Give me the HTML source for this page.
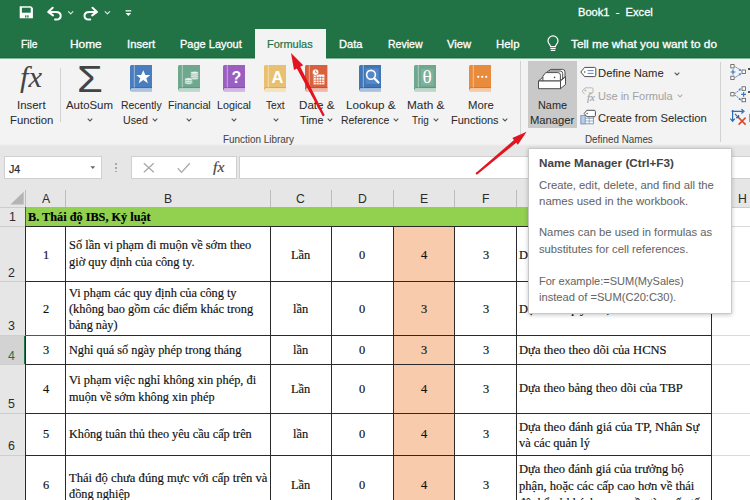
<!DOCTYPE html>
<html lang="vi"><head><meta charset="utf-8"><title>Name Manager - Excel</title>
<style>
html,body{margin:0;padding:0}
body{width:750px;height:500px;overflow:hidden;position:relative;background:#fff;font-family:"Liberation Sans", sans-serif;}
#app{position:absolute;left:0;top:0;width:750px;height:500px;overflow:hidden;background:#fff}
#app div,#app svg{position:absolute}
.t{position:absolute;white-space:pre;line-height:16px;height:16px;transform-origin:0 50%;-webkit-text-stroke:.05px}
.s{font-family:"Liberation Serif", serif;-webkit-text-stroke:.18px}
</style></head><body><div id="app">
<div style="left:0px;top:0px;width:750px;height:58px;background:#217346;"></div>
<div style="left:0px;top:57px;width:750px;height:1px;background:#1e6a40;"></div>
<div style="left:0px;top:58px;width:750px;height:1px;background:#86b79d;"></div>
<div style="left:255px;top:29px;width:71px;height:30px;background:#f3f3f3;"></div>
<div style="left:0px;top:59px;width:750px;height:87px;background:#f3f3f3;"></div>
<div style="left:0px;top:144px;width:750px;height:2px;background:linear-gradient(#f0f0f0,#e9e9e9);"></div>
<div style="left:0px;top:146px;width:750px;height:62px;background:#e6e6e6;"></div>
<svg style="left:18px;top:5px" width="120" height="18" viewBox="0 0 120 18" fill="none" stroke="#fff" stroke-width="1.4" stroke-linejoin="round" stroke-linecap="round"><path d="M1.700 1.200h11.300l1.900 1.900v10.100h-13.200z" fill="#fff" stroke="none"/><rect x="3.900" y="2.700" width="8.800" height="5" fill="#217346" stroke="none"/><rect x="7.100" y="10.300" width="1.300" height="2.300" fill="#217346" stroke="none"/><rect x="9.300" y="10.300" width="1.300" height="2.300" fill="#217346" stroke="none"/><path d="M34.700 2.700 30.200 6.900l4.800 3.500" stroke-width="2"/><path d="M30.800 6.900h7c3 0 4.900 1.700 4.900 3.900 0 2.300-1.900 3.800-4.400 3.800h-1.300" stroke-width="2"/><path d="M74.500 2.700 79 6.900l-4.800 3.500" stroke-width="2"/><path d="M78.400 6.900h-7c-3 0-4.900 1.700-4.900 3.900 0 2.300 1.900 3.800 4.400 3.800h1.300" stroke-width="2"/><path d="M50.500 6.600l2.200 2.200 2.200-2.200" stroke-width="1.200" stroke="#d8eae0"/><path d="M87.200 6.600l2.200 2.200 2.200-2.200" stroke-width="1.200" stroke="#d8eae0"/><path d="M108 5.800h4.800" stroke-width="1.300"/><path d="M107.600 8.100h5.600l-2.800 2.800z" fill="#fff" stroke="none"/></svg>
<svg style="left:545px;top:34px" width="16" height="20" viewBox="0 0 16 20" fill="none" stroke="#fff" stroke-width="1.2" stroke-linecap="round"><path d="M5.600 12.600c0-1.800-2.600-2.900-2.600-5.700a5 5 0 0 1 10 0c0 2.800-2.600 3.900-2.600 5.700z"/><path d="M5.800 14.600h4.400M6.200 16.500h3.600"/></svg>
<div style="left:60px;top:68px;width:1px;height:54px;background:#d2d2d2;"></div>
<svg style="left:86.4px;top:116.5px" width="8" height="6" viewBox="0 0 8 6" fill="none" stroke="#555" stroke-width="1.1"><path d="M1.700 1.700 4 4l2.300-2.300"/></svg>
<svg style="left:129.7px;top:65.2px" width="22.4" height="26.4" viewBox="0 0 22.400 26.400"><path d="M1.600 0h20.800v26.400h-20.800a1.600 1.600 0 0 1-1.600-1.600v-23.200a1.600 1.600 0 0 1 1.600-1.600z" fill="#4a7dbd"/><path d="M1 22.800h21.400v3.600h-20.600a1.600 1.600 0 0 1-1.400-2.200z" fill="#fff" opacity=".55"/><path d="M0.300 24.200a1.700 1.700 0 0 1 1.500-1.600h20.600" fill="none" stroke="#3a67a3" stroke-width=".9"/><path d="M4.300 0v22.600" stroke="#fff" stroke-opacity=".5" stroke-width=".9"/><path d="M13.300 5.200l2.050 4.700h5l-4 3.250 1.550 5-4.600-3.100-4.600 3.100 1.550-5-4-3.250h5z" fill="#fff"/></svg>
<svg style="left:151px;top:117px" width="8" height="6" viewBox="0 0 8 6" fill="none" stroke="#555" stroke-width="1.1"><path d="M1.700 1.700 4 4l2.300-2.300"/></svg>
<svg style="left:178px;top:65.2px" width="22.4" height="26.4" viewBox="0 0 22.400 26.400"><path d="M1.600 0h20.800v26.400h-20.800a1.600 1.600 0 0 1-1.600-1.600v-23.200a1.600 1.600 0 0 1 1.600-1.600z" fill="#6fa78f"/><path d="M1 22.800h21.400v3.600h-20.600a1.600 1.600 0 0 1-1.400-2.200z" fill="#fff" opacity=".55"/><path d="M0.300 24.200a1.700 1.700 0 0 1 1.500-1.600h20.600" fill="none" stroke="#5b917a" stroke-width=".9"/><path d="M4.300 0v22.600" stroke="#fff" stroke-opacity=".5" stroke-width=".9"/><g fill="#e8f1ed" stroke="#6aa38b" stroke-width=".5"><ellipse cx="16.500" cy="13.200" rx="3.900" ry="1.500"/><ellipse cx="16.500" cy="11.400" rx="3.900" ry="1.500"/><ellipse cx="16.500" cy="9.600" rx="3.900" ry="1.500"/><ellipse cx="16.500" cy="7.800" rx="3.900" ry="1.500"/><ellipse cx="10.600" cy="17.800" rx="3.900" ry="1.500"/><ellipse cx="10.600" cy="16" rx="3.900" ry="1.500"/><ellipse cx="10.600" cy="14.200" rx="3.900" ry="1.500"/></g></svg>
<svg style="left:185px;top:116.5px" width="8" height="6" viewBox="0 0 8 6" fill="none" stroke="#555" stroke-width="1.1"><path d="M1.700 1.700 4 4l2.300-2.300"/></svg>
<svg style="left:223px;top:65.2px" width="22.4" height="26.4" viewBox="0 0 22.400 26.400"><path d="M1.600 0h20.800v26.400h-20.800a1.600 1.600 0 0 1-1.600-1.600v-23.200a1.600 1.600 0 0 1 1.600-1.600z" fill="#9a5fc0"/><path d="M1 22.800h21.400v3.600h-20.600a1.600 1.600 0 0 1-1.400-2.200z" fill="#fff" opacity=".55"/><path d="M0.300 24.200a1.700 1.700 0 0 1 1.500-1.600h20.600" fill="none" stroke="#8049a8" stroke-width=".9"/><path d="M4.300 0v22.600" stroke="#fff" stroke-opacity=".5" stroke-width=".9"/><text x="13.400" y="18.200" font-family="Liberation Sans, sans-serif" font-weight="700" font-size="16" fill="#fff" text-anchor="middle">?</text></svg>
<svg style="left:230px;top:116.5px" width="8" height="6" viewBox="0 0 8 6" fill="none" stroke="#555" stroke-width="1.1"><path d="M1.700 1.700 4 4l2.300-2.300"/></svg>
<svg style="left:264px;top:65.2px" width="22.4" height="26.4" viewBox="0 0 22.400 26.400"><path d="M1.600 0h20.800v26.400h-20.800a1.600 1.600 0 0 1-1.600-1.600v-23.200a1.600 1.600 0 0 1 1.600-1.600z" fill="#e9c06f"/><path d="M1 22.800h21.400v3.600h-20.600a1.600 1.600 0 0 1-1.400-2.200z" fill="#fff" opacity=".55"/><path d="M0.300 24.200a1.700 1.700 0 0 1 1.500-1.600h20.600" fill="none" stroke="#d5a750" stroke-width=".9"/><path d="M4.300 0v22.600" stroke="#fff" stroke-opacity=".5" stroke-width=".9"/><text x="13.400" y="18.300" font-family="Liberation Sans, sans-serif" font-size="16.500" font-weight="700" fill="#fff" text-anchor="middle">A</text></svg>
<svg style="left:271.8px;top:116.5px" width="8" height="6" viewBox="0 0 8 6" fill="none" stroke="#555" stroke-width="1.1"><path d="M1.700 1.700 4 4l2.300-2.300"/></svg>
<svg style="left:305.2px;top:65.2px" width="22.4" height="26.4" viewBox="0 0 22.400 26.400"><path d="M1.600 0h20.800v26.400h-20.800a1.600 1.600 0 0 1-1.600-1.600v-23.200a1.600 1.600 0 0 1 1.600-1.600z" fill="#d9603e"/><path d="M1 22.800h21.400v3.600h-20.600a1.600 1.600 0 0 1-1.400-2.200z" fill="#fff" opacity=".55"/><path d="M0.300 24.200a1.700 1.700 0 0 1 1.500-1.600h20.600" fill="none" stroke="#bf4c2c" stroke-width=".9"/><path d="M4.300 0v22.600" stroke="#fff" stroke-opacity=".5" stroke-width=".9"/><rect x="8.600" y="9.600" width="10.800" height="9.800" fill="#fff"/><path d="M8.600 12.600h10.800M8.600 15.200h10.800M8.600 17.600h10.800M11.300 11v8.400M14 11v8.400M16.700 11v8.400" stroke="#d9603e" stroke-width=".7"/><circle cx="10.600" cy="7.200" r="3.300" fill="#fff" stroke="#d9603e" stroke-width=".8"/><path d="M10.600 5.400v2h1.600" stroke="#d9603e" stroke-width=".8" fill="none"/></svg>
<svg style="left:326px;top:117px" width="8" height="6" viewBox="0 0 8 6" fill="none" stroke="#555" stroke-width="1.1"><path d="M1.700 1.700 4 4l2.300-2.300"/></svg>
<svg style="left:359px;top:65.2px" width="22.4" height="26.4" viewBox="0 0 22.400 26.400"><path d="M1.600 0h20.800v26.400h-20.800a1.600 1.600 0 0 1-1.600-1.600v-23.200a1.600 1.600 0 0 1 1.600-1.600z" fill="#4076b6"/><path d="M1 22.800h21.400v3.600h-20.600a1.600 1.600 0 0 1-1.400-2.200z" fill="#fff" opacity=".55"/><path d="M0.300 24.200a1.700 1.700 0 0 1 1.500-1.600h20.600" fill="none" stroke="#2f5f99" stroke-width=".9"/><path d="M4.300 0v22.600" stroke="#fff" stroke-opacity=".5" stroke-width=".9"/><rect x="6.600" y="3.400" width="13.200" height="15.600" fill="#5488c7"/><circle cx="12" cy="9.800" r="4.400" fill="none" stroke="#fff" stroke-width="1.600"/><path d="M15.300 13.200l4.200 4.400" stroke="#fff" stroke-width="2.100" stroke-linecap="round"/></svg>
<svg style="left:392.4px;top:117px" width="8" height="6" viewBox="0 0 8 6" fill="none" stroke="#555" stroke-width="1.1"><path d="M1.700 1.700 4 4l2.300-2.300"/></svg>
<svg style="left:413.6px;top:65.2px" width="22.4" height="26.4" viewBox="0 0 22.400 26.400"><path d="M1.600 0h20.800v26.400h-20.800a1.600 1.600 0 0 1-1.600-1.600v-23.200a1.600 1.600 0 0 1 1.600-1.600z" fill="#6fa78f"/><path d="M1 22.800h21.400v3.600h-20.600a1.600 1.600 0 0 1-1.400-2.200z" fill="#fff" opacity=".55"/><path d="M0.300 24.200a1.700 1.700 0 0 1 1.500-1.600h20.600" fill="none" stroke="#5b917a" stroke-width=".9"/><path d="M4.300 0v22.600" stroke="#fff" stroke-opacity=".5" stroke-width=".9"/><rect x="7" y="3.600" width="12.600" height="17" fill="#7fb19b"/><text x="13.300" y="18.400" font-family="Liberation Serif, serif" font-size="19.500" fill="#fff" text-anchor="middle">θ</text></svg>
<svg style="left:432px;top:117px" width="8" height="6" viewBox="0 0 8 6" fill="none" stroke="#555" stroke-width="1.1"><path d="M1.700 1.700 4 4l2.300-2.300"/></svg>
<svg style="left:468.8px;top:65.2px" width="22.4" height="26.4" viewBox="0 0 22.400 26.400"><path d="M1.600 0h20.800v26.400h-20.800a1.600 1.600 0 0 1-1.600-1.600v-23.200a1.600 1.600 0 0 1 1.600-1.600z" fill="#e98b3c"/><path d="M1 22.800h21.400v3.600h-20.600a1.600 1.600 0 0 1-1.400-2.200z" fill="#fff" opacity=".55"/><path d="M0.300 24.200a1.700 1.700 0 0 1 1.500-1.600h20.600" fill="none" stroke="#cf7226" stroke-width=".9"/><path d="M4.300 0v22.600" stroke="#fff" stroke-opacity=".5" stroke-width=".9"/><circle cx="9.200" cy="11.800" r="1.150" fill="#fff"/><circle cx="13.200" cy="11.800" r="1.150" fill="#fff"/><circle cx="17.200" cy="11.800" r="1.150" fill="#fff"/></svg>
<svg style="left:501.3px;top:117px" width="8" height="6" viewBox="0 0 8 6" fill="none" stroke="#555" stroke-width="1.1"><path d="M1.700 1.700 4 4l2.300-2.300"/></svg>
<div style="left:519.5px;top:61px;width:1px;height:73px;background:#d2d2d2;"></div>
<div style="left:528px;top:60.6px;width:49px;height:67.4px;background:#c9c9c9;"></div>
<svg style="left:537px;top:67px" width="30" height="23" viewBox="0 0 30 23" fill="#fff" stroke="#4d4d4d" stroke-width="1" stroke-linejoin="round"><path d="M1.500 14l4.600-4.200h22.400l-5 4.200z" fill="#e9e9e9"/><path d="M10.500 11v-5l2.800-3.600h12.200q2.500 0 2.500 2.500v6.100z"/><path d="M8.200 12.600v-5l2.800-3.600h12.200q2.500 0 2.500 2.500v6.100z"/><path d="M5.900 14v-4.800l2.800-3.600h12.200q2.500 0 2.500 2.500v5.900z"/><circle cx="17.600" cy="10.400" r=".8" fill="#4d4d4d" stroke="none"/><path d="M1.500 14h22v7.700h-22z"/><path d="M23.500 14l5-4.200v7.700l-5 4.200z"/></svg>
<svg style="left:579.500px;top:66px" width="17" height="12" viewBox="0 0 17 12" fill="#fff" stroke="#4d4d4d" stroke-width="1" stroke-linejoin="round"><path d="M4.600 1.400h9.800a1.400 1.400 0 0 1 1.400 1.400v6.400a1.400 1.400 0 0 1-1.400 1.400h-9.800l-3.800-4.600z"/><circle cx="4.700" cy="6" r=".8" fill="#4d4d4d" stroke="none"/><path d="M7.600 4.600h6M7.600 7.400h6" stroke="#4a78b8" stroke-width=".9"/><!--end--></svg>
<svg style="left:672.6px;top:70.5px" width="8" height="6" viewBox="0 0 8 6" fill="none" stroke="#555" stroke-width="1.1"><path d="M1.700 1.700 4 4l2.300-2.300"/></svg>
<svg style="left:580px;top:86px" width="17" height="18" viewBox="0 0 17 18" fill="none" stroke="#b9b9b9" stroke-width="1"><path d="M5 1.800h6.800a1.200 1.200 0 0 1 1.200 1.200v3.800h-4.200M5 1.800l-2.800 3.400 2.400 3" fill="none"/><circle cx="5.400" cy="4.400" r=".7"/><!--end--></svg>
<svg style="left:676.4px;top:93px" width="8" height="6" viewBox="0 0 8 6" fill="none" stroke="#b0b0b0" stroke-width="1.1"><path d="M1.700 1.700 4 4l2.300-2.300"/></svg>
<svg style="left:579.500px;top:108px" width="17" height="18" viewBox="0 0 17 18" fill="none" stroke="#4d4d4d" stroke-width="1"><rect x="1" y="7.600" width="12.400" height="8.200" fill="#fff" stroke="#7d9cc4"/><path d="M1 10.300h12.400M1 13h12.400M5.100 7.600v8.200M9.200 7.600v8.200" stroke="#7d9cc4" stroke-width=".8"/><rect x="1" y="7.600" width="4.100" height="8.200" fill="#b9cde8" stroke="#7d9cc4" stroke-width=".8"/><path d="M6.800 2.300h7.400a1.200 1.200 0 0 1 1.200 1.200v4a1.200 1.200 0 0 1-1.200 1.200h-7.400l-2.600-3.200z" fill="#fff"/><circle cx="7.100" cy="5.500" r=".7" fill="#4d4d4d" stroke="none"/><!--end--></svg>
<div style="left:720.3px;top:62px;width:1px;height:80px;background:#d2d2d2;"></div>
<svg style="left:729px;top:62px" width="21" height="66" viewBox="0 0 21 66" fill="none"><rect x="1.8" y="2.6" width="3.3" height="3.3" fill="#fff" stroke="#555" stroke-width=".8"/><rect x="1.8" y="14.2" width="3.3" height="3.3" fill="#fff" stroke="#555" stroke-width=".8"/><rect x="13" y="8" width="3.5" height="3.5" fill="#fff" stroke="#555" stroke-width=".8"/><path d="M6.400 4.800l5.400 3.600M6.400 15.400l5.400-3.600" stroke="#3b78c3" stroke-width="1" stroke-dasharray="1.600 .900"/><path d="M9.600 8.800l2.400-.2-1-2.200zM9.600 11.400l2.400.2-1 2.200z" fill="#3b78c3"/><path d="M4 7.600v4.800M1.600 10h4.800" stroke="#3b78c3" stroke-width="1.200"/><rect x="1.8" y="30.6" width="3.3" height="3.3" fill="#fff" stroke="#555" stroke-width=".8"/><rect x="13" y="24.8" width="3.5" height="3.5" fill="#fff" stroke="#555" stroke-width=".8"/><rect x="13" y="36.3" width="3.5" height="3.5" fill="#fff" stroke="#555" stroke-width=".8"/><path d="M6.200 31.400l5 -4M6.200 33.200l5 4" stroke="#3b78c3" stroke-width="1" stroke-dasharray="1.600 .900"/><path d="M9.400 27l2.500-.8-.7 2.500zM9.400 37.600l2.500.8-.7-2.500z" fill="#3b78c3"/><path d="M14.600 29.900v4.800M12.200 32.300h4.800" stroke="#3b78c3" stroke-width="1.200"/><path d="M3.600 48v10.800M1.400 56.600l2.200 2.600 2.200-2.600M3.600 49.300h10.400M12.400 47.100l2.600 2.200-2.600 2.200M6 52l3.400 3.400M9.600 53v2.600h-2.600" stroke="#2f6db5" stroke-width="1.200"/><circle cx="3.600" cy="49.300" r="1.100" fill="#2f6db5"/><path d="M9.600 55.600l7 7M16.600 55.600l-7 7" stroke="#d9482b" stroke-width="1.500"/><!--end--></svg>
<div style="left:748px;top:68.4px;width:2px;height:1.2px;background:#555;"></div>
<div style="left:748px;top:91.4px;width:2px;height:1.2px;background:#555;"></div>
<div style="left:748.8px;top:113.5px;width:1.2px;height:8px;background:#9a9a9a;"></div>
<div style="left:4px;top:156px;width:98px;height:23px;background:#fff;box-sizing:border-box;border:1px solid #d0d0d0"></div>
<svg style="left:89px;top:165px" width="8" height="5" viewBox="0 0 8 5"><path d="M1.400 1.200h4.800l-2.400 2.800z" fill="#666"/></svg>
<div style="left:115px;top:163.10000000000002px;width:1.5px;height:1.5px;background:#a8a8a8;"></div>
<div style="left:115px;top:167.0px;width:1.5px;height:1.5px;background:#a8a8a8;"></div>
<div style="left:115px;top:170.8px;width:1.5px;height:1.5px;background:#a8a8a8;"></div>
<div style="left:131px;top:156px;width:106px;height:23px;background:#fff;box-sizing:border-box;border:1px solid #d0d0d0"></div>
<svg style="left:142px;top:162px" width="50" height="12" viewBox="0 0 50 12" fill="none" stroke="#a9a9a9" stroke-width="1.300"><path d="M1.800 1.300l10 9M11.800 1.300l-10 9"/><path d="M35.800 6.300l3.700 4.100 8.300-9.200"/></svg>
<div style="left:239px;top:156px;width:520px;height:23px;background:#fff;box-sizing:border-box;border:1px solid #d0d0d0"></div>
<div style="left:25.0px;top:189.5px;width:1px;height:17.5px;background:#bcbcbc;"></div>
<div style="left:65.3px;top:189.5px;width:1px;height:17.5px;background:#bcbcbc;"></div>
<div style="left:269.5px;top:189.5px;width:1px;height:17.5px;background:#bcbcbc;"></div>
<div style="left:331.1px;top:189.5px;width:1px;height:17.5px;background:#bcbcbc;"></div>
<div style="left:392.8px;top:189.5px;width:1px;height:17.5px;background:#bcbcbc;"></div>
<div style="left:453.9px;top:189.5px;width:1px;height:17.5px;background:#bcbcbc;"></div>
<div style="left:516.0px;top:189.5px;width:1px;height:17.5px;background:#bcbcbc;"></div>
<div style="left:710.5px;top:189.5px;width:1px;height:17.5px;background:#bcbcbc;"></div>
<svg style="left:9px;top:190px" width="16" height="16" viewBox="0 0 16 16"><path d="M1.400 14.600h13.300v-12.800z" fill="#b4b4b4"/></svg>
<div style="left:0px;top:206.5px;width:750px;height:1px;background:#cdcdcd;"></div>
<div style="left:0px;top:208px;width:25.5px;height:292px;background:#e6e6e6;"></div>
<div style="left:0px;top:335px;width:25.5px;height:29.5px;background:#d3d3d3;"></div>
<div style="left:24px;top:335px;width:1.8px;height:29.5px;background:#217346;"></div>
<div style="left:0px;top:226.0px;width:25px;height:1px;background:#cecece;"></div>
<div style="left:0px;top:281.0px;width:25px;height:1px;background:#cecece;"></div>
<div style="left:0px;top:335.0px;width:25px;height:1px;background:#cecece;"></div>
<div style="left:0px;top:364.0px;width:25px;height:1px;background:#cecece;"></div>
<div style="left:0px;top:413.0px;width:25px;height:1px;background:#cecece;"></div>
<div style="left:0px;top:455.0px;width:25px;height:1px;background:#cecece;"></div>
<div style="left:711px;top:226.0px;width:39px;height:1px;background:#d9d9d9;"></div>
<div style="left:711px;top:281.0px;width:39px;height:1px;background:#d9d9d9;"></div>
<div style="left:711px;top:335.0px;width:39px;height:1px;background:#d9d9d9;"></div>
<div style="left:711px;top:364.0px;width:39px;height:1px;background:#d9d9d9;"></div>
<div style="left:711px;top:413.0px;width:39px;height:1px;background:#d9d9d9;"></div>
<div style="left:711px;top:455.0px;width:39px;height:1px;background:#d9d9d9;"></div>
<div style="left:25.5px;top:207px;width:686px;height:19px;background:#92d050;"></div>
<div style="left:393.3px;top:226px;width:61.1px;height:280px;background:#f8cbad;"></div>
<div style="left:25.0px;top:226px;width:1px;height:280px;background:#2a2a2a;"></div>
<div style="left:65.3px;top:226px;width:1px;height:280px;background:#2a2a2a;"></div>
<div style="left:269.5px;top:226px;width:1px;height:280px;background:#2a2a2a;"></div>
<div style="left:331.1px;top:226px;width:1px;height:280px;background:#2a2a2a;"></div>
<div style="left:392.8px;top:226px;width:1px;height:280px;background:#2a2a2a;"></div>
<div style="left:453.9px;top:226px;width:1px;height:280px;background:#2a2a2a;"></div>
<div style="left:516.0px;top:226px;width:1px;height:280px;background:#2a2a2a;"></div>
<div style="left:710.5px;top:226px;width:1px;height:280px;background:#2a2a2a;"></div>
<div style="left:25px;top:207px;width:1px;height:19px;background:#555;"></div>
<div style="left:710.5px;top:207px;width:1px;height:19px;background:#2a2a2a;"></div>
<div style="left:25px;top:226.0px;width:686.5px;height:1px;background:#2a2a2a;"></div>
<div style="left:25px;top:281.0px;width:686.5px;height:1px;background:#2a2a2a;"></div>
<div style="left:25px;top:335.0px;width:686.5px;height:1px;background:#2a2a2a;"></div>
<div style="left:25px;top:364.0px;width:686.5px;height:1px;background:#2a2a2a;"></div>
<div style="left:25px;top:413.0px;width:686.5px;height:1px;background:#2a2a2a;"></div>
<div style="left:25px;top:455.0px;width:686.5px;height:1px;background:#2a2a2a;"></div>
<div style="left:24.5px;top:334.5px;width:42px;height:1.5px;background:#217346;"></div>
<div style="left:528px;top:148px;width:204px;height:166px;background:#fff;z-index:5;box-sizing:border-box;border:1px solid #c9c9c9;box-shadow:0 1px 4px rgba(0,0,0,.22);border-radius:1px"></div>
<svg style="left:0;top:0;z-index:4" width="750" height="500" viewBox="0 0 750 500"><path d="M324.3 114.5L299.7 65.4L296.2 67.2L322.3 115.5z" fill="#e1141f"/><circle cx="323.3" cy="115.0" r="1.15" fill="#e1141f"/><path d="M291.0 53.0L303.2 65.2L294.0 70.0z" fill="#e1141f"/><path d="M477.5 174.3L517.4 141.8L515.1 139.1L476.1 172.7z" fill="#e1141f"/><circle cx="476.8" cy="173.5" r="1.10" fill="#e1141f"/><path d="M526.6 131.8L517.9 144.8L512.3 138.1z" fill="#e1141f"/></svg>
<span class="t" style="left:20.60px;top:35.60px;font-size:11.2px;color:#fff;-webkit-text-stroke:0.3px;transform:scaleX(0.9095);">File</span>
<span class="t" style="left:70.00px;top:35.60px;font-size:11.2px;color:#fff;-webkit-text-stroke:0.3px;transform:scaleX(1.0622);">Home</span>
<span class="t" style="left:126.80px;top:35.60px;font-size:11.2px;color:#fff;-webkit-text-stroke:0.3px;transform:scaleX(1.0077);">Insert</span>
<span class="t" style="left:180.00px;top:35.60px;font-size:11.2px;color:#fff;-webkit-text-stroke:0.3px;transform:scaleX(0.9836);">Page Layout</span>
<span class="t" style="left:267.00px;top:35.60px;font-size:11.2px;color:#217346;-webkit-text-stroke:0.2px;transform:scaleX(0.9802);">Formulas</span>
<span class="t" style="left:338.50px;top:35.60px;font-size:11.2px;color:#fff;-webkit-text-stroke:0.3px;transform:scaleX(0.9941);">Data</span>
<span class="t" style="left:387.50px;top:35.60px;font-size:11.2px;color:#fff;-webkit-text-stroke:0.3px;transform:scaleX(0.9404);">Review</span>
<span class="t" style="left:447.00px;top:35.60px;font-size:11.2px;color:#fff;-webkit-text-stroke:0.3px;transform:scaleX(0.9981);">View</span>
<span class="t" style="left:496.00px;top:35.60px;font-size:11.2px;color:#fff;-webkit-text-stroke:0.3px;transform:scaleX(1.0210);">Help</span>
<span class="t" style="left:571.00px;top:35.60px;font-size:11.2px;color:#fff;-webkit-text-stroke:0.3px;transform:scaleX(1.0575);">Tell me what you want to do</span>
<span class="t" style="left:578.40px;top:4.40px;font-size:11.2px;color:#fff;-webkit-text-stroke:0.3px;transform:scaleX(0.9940);">Book1  -  Excel</span>
<span class="t s" style="left:20.00px;top:69.20px;font-size:29px;color:#444;font-style:italic;-webkit-text-stroke:0px;transform:scaleX(1.0507);">fx</span>
<span class="t" style="left:17.00px;top:96.60px;font-size:11px;color:#2b2b2b;transform:scaleX(1.0394);">Insert</span>
<span class="t" style="left:9.60px;top:111.80px;font-size:11px;color:#2b2b2b;transform:scaleX(1.0284);">Function</span>
<span class="t" style="left:76.80px;top:71.00px;font-size:37.5px;color:#444;-webkit-text-stroke:0px;transform:scaleX(1.1127);">Σ</span>
<span class="t" style="left:66.00px;top:96.60px;font-size:11px;color:#2b2b2b;transform:scaleX(1.0387);">AutoSum</span>
<span class="t" style="left:120.80px;top:96.60px;font-size:11px;color:#2b2b2b;transform:scaleX(0.9487);">Recently</span>
<span class="t" style="left:122.90px;top:111.80px;font-size:11px;color:#2b2b2b;transform:scaleX(0.9655);">Used</span>
<span class="t" style="left:168.00px;top:96.60px;font-size:11px;color:#2b2b2b;transform:scaleX(0.9698);">Financial</span>
<span class="t" style="left:217.00px;top:96.60px;font-size:11px;color:#2b2b2b;transform:scaleX(0.9753);">Logical</span>
<span class="t" style="left:266.40px;top:96.60px;font-size:11px;color:#2b2b2b;transform:scaleX(0.9214);">Text</span>
<span class="t" style="left:299.30px;top:96.60px;font-size:11px;color:#2b2b2b;transform:scaleX(1.0553);">Date &amp;</span>
<span class="t" style="left:300.00px;top:111.80px;font-size:11px;color:#2b2b2b;transform:scaleX(0.9731);">Time</span>
<span class="t" style="left:345.70px;top:96.60px;font-size:11px;color:#2b2b2b;transform:scaleX(1.0670);">Lookup &amp;</span>
<span class="t" style="left:340.60px;top:111.80px;font-size:11px;color:#2b2b2b;transform:scaleX(0.9495);">Reference</span>
<span class="t" style="left:406.50px;top:96.60px;font-size:11px;color:#2b2b2b;transform:scaleX(1.0758);">Math &amp;</span>
<span class="t" style="left:411.50px;top:111.80px;font-size:11px;color:#2b2b2b;transform:scaleX(0.9004);">Trig</span>
<span class="t" style="left:467.50px;top:96.60px;font-size:11px;color:#2b2b2b;transform:scaleX(1.0294);">More</span>
<span class="t" style="left:450.80px;top:111.80px;font-size:11px;color:#2b2b2b;transform:scaleX(0.9978);">Functions</span>
<span class="t" style="left:223.30px;top:131.20px;font-size:11px;color:#444;transform:scaleX(0.9002);">Function Library</span>
<span class="t" style="left:538.00px;top:96.60px;font-size:11px;color:#2b2b2b;transform:scaleX(0.9883);">Name</span>
<span class="t" style="left:530.40px;top:111.80px;font-size:11px;color:#2b2b2b;transform:scaleX(1.0202);">Manager</span>
<span class="t" style="left:598.30px;top:65.40px;font-size:11px;color:#2b2b2b;transform:scaleX(1.0233);">Define Name</span>
<span class="t s" style="left:586.50px;top:88.80px;font-size:11px;color:#a6a6a6;font-style:italic;transform:scaleX(1.0059);">fx</span>
<span class="t" style="left:598.30px;top:87.70px;font-size:11px;color:#a3a3a3;transform:scaleX(1.0016);">Use in Formula</span>
<span class="t" style="left:598.30px;top:110.00px;font-size:11px;color:#2b2b2b;transform:scaleX(1.0217);">Create from Selection</span>
<span class="t" style="left:585.40px;top:131.20px;font-size:11px;color:#444;transform:scaleX(0.8941);">Defined Names</span>
<span class="t" style="left:9.10px;top:160.60px;font-size:11.4px;color:#2b2b2b;-webkit-text-stroke:0.25px;transform:scaleX(0.9309);">J4</span>
<span class="t s" style="left:212.60px;top:159.40px;font-size:15px;color:#444;font-style:italic;transform:scaleX(1.0528);">fx</span>
<span class="t" style="left:41.72px;top:191.20px;font-size:12.6px;color:#2b2b2b;-webkit-text-stroke:0px;transform:scaleX(0.9700);">A</span>
<span class="t" style="left:163.72px;top:191.20px;font-size:12.6px;color:#2b2b2b;-webkit-text-stroke:0px;transform:scaleX(0.9700);">B</span>
<span class="t" style="left:296.38px;top:191.20px;font-size:12.6px;color:#2b2b2b;-webkit-text-stroke:0px;transform:scaleX(0.9700);">C</span>
<span class="t" style="left:357.98px;top:191.20px;font-size:12.6px;color:#2b2b2b;-webkit-text-stroke:0px;transform:scaleX(0.9700);">D</span>
<span class="t" style="left:419.92px;top:191.20px;font-size:12.6px;color:#2b2b2b;-webkit-text-stroke:0px;transform:scaleX(0.9700);">E</span>
<span class="t" style="left:481.76px;top:191.20px;font-size:12.6px;color:#2b2b2b;-webkit-text-stroke:0px;transform:scaleX(0.9700);">F</span>
<span class="t" style="left:608.75px;top:191.20px;font-size:12.6px;color:#2b2b2b;-webkit-text-stroke:0px;transform:scaleX(0.9700);">G</span>
<span class="t" style="left:737.98px;top:191.20px;font-size:12.6px;color:#2b2b2b;-webkit-text-stroke:0px;transform:scaleX(0.9700);">H</span>
<span class="t" style="left:8.84px;top:209.30px;font-size:12.8px;color:#2b2b2b;-webkit-text-stroke:0px;transform:scaleX(0.9700);">1</span>
<span class="t" style="left:7.84px;top:264.60px;font-size:12.8px;color:#2b2b2b;-webkit-text-stroke:0px;transform:scaleX(0.9700);">2</span>
<span class="t" style="left:7.84px;top:318.00px;font-size:12.8px;color:#2b2b2b;-webkit-text-stroke:0px;transform:scaleX(0.9700);">3</span>
<span class="t" style="left:7.84px;top:347.50px;font-size:12.8px;color:#217346;-webkit-text-stroke:0px;transform:scaleX(0.9700);">4</span>
<span class="t" style="left:7.84px;top:396.00px;font-size:12.8px;color:#2b2b2b;-webkit-text-stroke:0px;transform:scaleX(0.9700);">5</span>
<span class="t" style="left:7.84px;top:438.00px;font-size:12.8px;color:#2b2b2b;-webkit-text-stroke:0px;transform:scaleX(0.9700);">6</span>
<span class="t s" style="left:28.30px;top:209.00px;font-size:13.2px;color:#000;font-weight:700;transform:scaleX(0.9291);">B. Thái độ IBS, Kỷ luật</span>
<span class="t s" style="left:68.50px;top:237.40px;font-size:13.2px;color:#111;transform:scaleX(0.9407);">Số lần vi phạm đi muộn về sớm theo</span>
<span class="t s" style="left:68.50px;top:254.00px;font-size:13.2px;color:#111;transform:scaleX(0.9395);">giờ quy định của công ty.</span>
<span class="t s" style="left:68.50px;top:284.60px;font-size:13.2px;color:#111;transform:scaleX(0.9318);">Vi phạm các quy định của công ty</span>
<span class="t s" style="left:68.50px;top:301.00px;font-size:13.2px;color:#111;transform:scaleX(0.9379);">(không bao gồm các điểm khác trong</span>
<span class="t s" style="left:68.50px;top:317.20px;font-size:13.2px;color:#111;transform:scaleX(0.9260);">bảng này)</span>
<span class="t s" style="left:68.50px;top:342.00px;font-size:13.2px;color:#111;transform:scaleX(0.9297);">Nghỉ quá số ngày phép trong tháng</span>
<span class="t s" style="left:68.50px;top:371.80px;font-size:13.2px;color:#111;transform:scaleX(0.9397);">Vi phạm việc nghỉ không xin phép, đi</span>
<span class="t s" style="left:68.50px;top:389.30px;font-size:13.2px;color:#111;transform:scaleX(0.9280);">muộn về sớm không xin phép</span>
<span class="t s" style="left:68.50px;top:426.00px;font-size:13.2px;color:#111;transform:scaleX(0.9256);">Không tuân thủ theo yêu cầu cấp trên</span>
<span class="t s" style="left:68.50px;top:469.50px;font-size:13.2px;color:#111;transform:scaleX(0.9571);">Thái độ chưa đúng mực với cấp trên và</span>
<span class="t s" style="left:68.50px;top:485.60px;font-size:13.2px;color:#111;transform:scaleX(0.9302);">đồng nghiệp</span>
<span class="t s" style="left:42.50px;top:246.60px;font-size:13.2px;color:#111;transform:scaleX(0.9400);">1</span>
<span class="t s" style="left:291.36px;top:246.60px;font-size:13.2px;color:#111;transform:scaleX(0.9400);">Lần</span>
<span class="t s" style="left:359.40px;top:246.60px;font-size:13.2px;color:#111;transform:scaleX(0.9400);">0</span>
<span class="t s" style="left:420.90px;top:246.60px;font-size:13.2px;color:#111;transform:scaleX(0.9400);">4</span>
<span class="t s" style="left:482.90px;top:246.60px;font-size:13.2px;color:#111;transform:scaleX(0.9400);">3</span>
<span class="t s" style="left:42.50px;top:301.00px;font-size:13.2px;color:#111;transform:scaleX(0.9400);">2</span>
<span class="t s" style="left:293.42px;top:301.00px;font-size:13.2px;color:#111;transform:scaleX(0.9400);">lần</span>
<span class="t s" style="left:359.40px;top:301.00px;font-size:13.2px;color:#111;transform:scaleX(0.9400);">0</span>
<span class="t s" style="left:420.90px;top:301.00px;font-size:13.2px;color:#111;transform:scaleX(0.9400);">3</span>
<span class="t s" style="left:482.90px;top:301.00px;font-size:13.2px;color:#111;transform:scaleX(0.9400);">3</span>
<span class="t s" style="left:42.50px;top:342.00px;font-size:13.2px;color:#111;transform:scaleX(0.9400);">3</span>
<span class="t s" style="left:293.42px;top:342.00px;font-size:13.2px;color:#111;transform:scaleX(0.9400);">lần</span>
<span class="t s" style="left:359.40px;top:342.00px;font-size:13.2px;color:#111;transform:scaleX(0.9400);">0</span>
<span class="t s" style="left:420.90px;top:342.00px;font-size:13.2px;color:#111;transform:scaleX(0.9400);">3</span>
<span class="t s" style="left:482.90px;top:342.00px;font-size:13.2px;color:#111;transform:scaleX(0.9400);">3</span>
<span class="t s" style="left:42.50px;top:380.60px;font-size:13.2px;color:#111;transform:scaleX(0.9400);">4</span>
<span class="t s" style="left:291.36px;top:380.60px;font-size:13.2px;color:#111;transform:scaleX(0.9400);">Lần</span>
<span class="t s" style="left:359.40px;top:380.60px;font-size:13.2px;color:#111;transform:scaleX(0.9400);">0</span>
<span class="t s" style="left:420.90px;top:380.60px;font-size:13.2px;color:#111;transform:scaleX(0.9400);">4</span>
<span class="t s" style="left:482.90px;top:380.60px;font-size:13.2px;color:#111;transform:scaleX(0.9400);">3</span>
<span class="t s" style="left:42.50px;top:426.20px;font-size:13.2px;color:#111;transform:scaleX(0.9400);">5</span>
<span class="t s" style="left:293.42px;top:426.20px;font-size:13.2px;color:#111;transform:scaleX(0.9400);">lần</span>
<span class="t s" style="left:359.40px;top:426.20px;font-size:13.2px;color:#111;transform:scaleX(0.9400);">0</span>
<span class="t s" style="left:420.90px;top:426.20px;font-size:13.2px;color:#111;transform:scaleX(0.9400);">4</span>
<span class="t s" style="left:482.90px;top:426.20px;font-size:13.2px;color:#111;transform:scaleX(0.9400);">3</span>
<span class="t s" style="left:42.50px;top:476.60px;font-size:13.2px;color:#111;transform:scaleX(0.9400);">6</span>
<span class="t s" style="left:291.36px;top:476.60px;font-size:13.2px;color:#111;transform:scaleX(0.9400);">Lần</span>
<span class="t s" style="left:359.40px;top:476.60px;font-size:13.2px;color:#111;transform:scaleX(0.9400);">0</span>
<span class="t s" style="left:420.90px;top:476.60px;font-size:13.2px;color:#111;transform:scaleX(0.9400);">4</span>
<span class="t s" style="left:482.90px;top:476.60px;font-size:13.2px;color:#111;transform:scaleX(0.9400);">3</span>
<span class="t s" style="left:519.20px;top:247.00px;font-size:13.2px;color:#111;transform:scaleX(0.9400);">Dựa theo bảng chấm công</span>
<span class="t s" style="left:519.20px;top:300.60px;font-size:13.2px;color:#111;transform:scaleX(0.9400);">Dựa theo quy chế, văn bản</span>
<span class="t s" style="left:519.20px;top:342.00px;font-size:13.2px;color:#111;transform:scaleX(0.9538);">Dựa theo theo dõi của HCNS</span>
<span class="t s" style="left:519.20px;top:380.30px;font-size:13.2px;color:#111;transform:scaleX(0.9498);">Dựa theo bảng theo dõi của TBP</span>
<span class="t s" style="left:519.20px;top:419.30px;font-size:13.2px;color:#111;transform:scaleX(0.9576);">Dựa theo đánh giá của TP, Nhân Sự</span>
<span class="t s" style="left:519.20px;top:435.00px;font-size:13.2px;color:#111;transform:scaleX(0.9341);">và các quản lý</span>
<span class="t s" style="left:519.20px;top:461.40px;font-size:13.2px;color:#111;transform:scaleX(0.9493);">Dựa theo đánh giá của trưởng bộ</span>
<span class="t s" style="left:519.20px;top:478.00px;font-size:13.2px;color:#111;transform:scaleX(0.9556);">phận, hoặc các cấp cao hơn về thái</span>
<span class="t s" style="left:519.20px;top:494.50px;font-size:13.2px;color:#111;transform:scaleX(0.9400);">độ, kể cả khách quan, cần tìm yếu tố</span>
<span class="t" style="left:539.20px;top:154.80px;font-size:11.8px;color:#444;font-weight:700;z-index:6;transform:scaleX(0.9909);">Name Manager (Ctrl+F3)</span>
<span class="t" style="left:539.20px;top:176.80px;font-size:11.8px;color:#666;z-index:6;transform:scaleX(0.9553);">Create, edit, delete, and find all the</span>
<span class="t" style="left:539.20px;top:192.80px;font-size:11.8px;color:#666;z-index:6;transform:scaleX(0.9729);">names used in the workbook.</span>
<span class="t" style="left:539.20px;top:224.40px;font-size:11.8px;color:#666;z-index:6;transform:scaleX(0.9535);">Names can be used in formulas as</span>
<span class="t" style="left:539.20px;top:241.00px;font-size:11.8px;color:#666;z-index:6;transform:scaleX(0.9527);">substitutes for cell references.</span>
<span class="t" style="left:539.20px;top:273.30px;font-size:11.8px;color:#666;z-index:6;transform:scaleX(0.9339);">For example:=SUM(MySales)</span>
<span class="t" style="left:539.20px;top:289.00px;font-size:11.8px;color:#666;z-index:6;transform:scaleX(0.9447);">instead of =SUM(C20:C30).</span>
</div></body></html>
